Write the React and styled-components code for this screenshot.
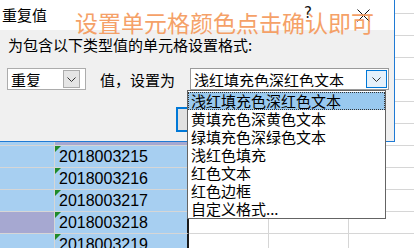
import React from "react";
import styled, { createGlobalStyle } from "styled-components";

const GlobalStyle = createGlobalStyle`
  html, body {
    margin: 0;
    padding: 0;
    background: #fff;
    overflow: hidden;
  }
  body {
    font-family: "Noto Sans CJK SC", "Liberation Sans", sans-serif;
  }
`;

const cols = ["a", "b", "c", "d", "e"];
const rows = [
  { a: "plain", b: "plain" },
  { a: "plain", b: "plain" },
  { a: "plain", b: "plain" },
  { a: "plain", b: "plain" },
  { a: "plain", b: "plain" },
  { a: "plain", b: "plain" },
  { a: "sel", b: "dup" },
  { a: "sel", b: "sel", id: "2018003215" },
  { a: "sel", b: "sel", id: "2018003216" },
  { a: "sel", b: "sel", id: "2018003217" },
  { a: "dup", b: "sel", id: "2018003218" },
  { a: "sel", b: "sel", id: "2018003219" },
];

const fills = {
  plain: "#ffffff",
  sel: "#a7cff1",
  dup: "#a6a8d1",
};

const listItems = [
  "浅红填充色深红色文本",
  "黄填充色深黄色文本",
  "绿填充色深绿色文本",
  "浅红色填充",
  "红色文本",
  "红色边框",
  "自定义格式...",
];

const Chevron = () => (
  <svg width="9" height="5" viewBox="0 0 9 5">
    <path d="M0.5 0.5 L4.5 4.5 L8.5 0.5" fill="none" stroke="#333" strokeWidth="1" />
  </svg>
);

const App = () => {
  return (
    <Page>
      <GlobalStyle />
      <Sheet>
        {rows.map((row, r) =>
          cols.map((c) => (
            <Cell key={r + c} $fill={fills[row[c] || "plain"]} $col={c} $sel={row.id && c === "b"}>
              {c === "b" && row.id && (
                <>
                  <Flag />
                  {row.id}
                </>
              )}
            </Cell>
          ))
        )}
      </Sheet>

      <Dialog>
        <TitleBar>
          <Title>重复值</Title>
          <Help>?</Help>
          <Close>
            <svg width="13" height="13" viewBox="0 0 13 13">
              <path d="M0.5 0.5 L12.5 12.5 M12.5 0.5 L0.5 12.5" stroke="#111" strokeWidth="1" />
            </svg>
          </Close>
        </TitleBar>
        <Body>
          <Label>为包含以下类型值的单元格设置格式:</Label>
          <FormRow>
            <Select $w={79}>
              <SelectText>重复</SelectText>
              <DropButton>
                <Chevron />
              </DropButton>
            </Select>
            <Label>值，设置为</Label>
            <Select $w={199} $wide>
              <SelectText>浅红填充色深红色文本</SelectText>
              <DropButton $focus>
                <Chevron />
              </DropButton>
            </Select>
          </FormRow>
          <Footer>
            <OkButton>确定</OkButton>
          </Footer>
        </Body>
      </Dialog>

      <Note>设置单元格颜色点击确认即可</Note>

      <List>
        {listItems.map((item, i) => (
          <Item key={item} $active={i === 0}>
            {item}
          </Item>
        ))}
      </List>
    </Page>
  );
};

export default App;

const Page = styled.div`
  position: relative;
  width: 414px;
  height: 248px;
  overflow: hidden;
`;

const Sheet = styled.div`
  display: grid;
  grid-template-columns: 55px 134px 80px 80px 80px;
  grid-auto-rows: 22px;
  margin-top: -8px;
`;

const Cell = styled.div`
  position: relative;
  box-sizing: border-box;
  background: ${(p) => p.$fill};
  border-bottom: 1px solid #d6d6d6;
  border-right: ${(p) => (p.$col === "b" ? "2px solid #1b1b1b" : "1px solid #d6d6d6")};
  font-family: "Liberation Sans", Arial, sans-serif;
  font-size: 16px;
  line-height: 21px;
  padding-left: 4px;
  color: #000;
  white-space: nowrap;
`;

const Flag = styled.span`
  position: absolute;
  left: 0;
  top: 0;
  width: 0;
  height: 0;
  border-top: 6px solid #1f8a2a;
  border-right: 6px solid transparent;
`;

const Dialog = styled.div`
  position: absolute;
  left: 0;
  top: 0;
  width: 395px;
  height: 142px;
  box-sizing: border-box;
  border-right: 1px solid #1f7ad4;
  border-bottom: 1px solid #1f7ad4;
  background: #f0f0f0;
  display: flex;
  flex-direction: column;
`;

const TitleBar = styled.div`
  height: 30px;
  background: #fff;
  display: flex;
  align-items: flex-start;
  padding-left: 2px;
`;

const Title = styled.div`
  font-size: 15px;
  line-height: 15px;
  margin-top: 7px;
  color: #000;
  flex: 1;
`;

const Help = styled.div`
  font-family: "DejaVu Sans", sans-serif;
  font-size: 15px;
  line-height: 15px;
  margin-top: 6px;
  color: #111;
  width: 10px;
  margin-right: 43px;
`;

const Close = styled.div`
  margin-top: 9px;
  margin-right: 24px;
  display: flex;
`;

const Body = styled.div`
  flex: 1;
  padding: 7px 0 0 8px;
  display: flex;
  flex-direction: column;
`;

const Label = styled.div`
  font-size: 15px;
  line-height: 15px;
  color: #000;
  white-space: nowrap;
`;

const FormRow = styled.div`
  display: flex;
  align-items: center;
  margin-top: 16px;
  margin-left: -1px;
  & > ${Label} {
    margin-left: 14px;
    margin-right: 15px;
  }
`;

const Select = styled.div`
  box-sizing: border-box;
  width: ${(p) => p.$w}px;
  height: 22px;
  background: #fff;
  border: 1px solid ${(p) => (p.$wide ? "#9a9a9a" : "#acacac")};
  display: flex;
  align-items: center;
  padding-right: ${(p) => (p.$wide ? 1 : 5)}px;
`;

const SelectText = styled.span`
  flex: 1;
  font-size: 15px;
  line-height: 15px;
  padding-left: 3px;
  color: #000;
  white-space: nowrap;
  overflow: hidden;
`;

const DropButton = styled.div`
  box-sizing: border-box;
  width: ${(p) => (p.$focus ? 21 : 17)}px;
  height: 18px;
  display: flex;
  align-items: center;
  justify-content: center;
  background: ${(p) => (p.$focus ? "#e5f1fb" : "#e5e5e5")};
  border: 1px solid ${(p) => (p.$focus ? "#0078d7" : "#acacac")};
`;

const Footer = styled.div`
  display: flex;
  margin-top: 17px;
  padding-left: 168px;
`;

const OkButton = styled.div`
  box-sizing: border-box;
  width: 75px;
  height: 25px;
  background: #e1e1e1;
  border: 2px solid #0078d7;
  font-size: 14px;
  line-height: 21px;
  text-align: center;
`;

const Note = styled.div`
  position: absolute;
  left: 75px;
  top: 11px;
  font-size: 23px;
  line-height: 23px;
  color: #f59a5c;
  opacity: 0.92;
  white-space: nowrap;
  pointer-events: none;
`;

const List = styled.div`
  position: absolute;
  left: 187px;
  top: 90px;
  width: 199px;
  height: 129px;
  box-sizing: border-box;
  border: 1px solid #646464;
  background: #fff;
  padding-top: 1px;
`;

const Item = styled.div`
  box-sizing: border-box;
  height: 18px;
  font-size: 15px;
  line-height: 16px;
  padding-left: 2px;
  color: #000;
  white-space: nowrap;
  background: ${(p) => (p.$active ? "#99c9ef" : "transparent")};
  border: 1px ${(p) => (p.$active ? "dotted #333" : "solid transparent")};
`;
